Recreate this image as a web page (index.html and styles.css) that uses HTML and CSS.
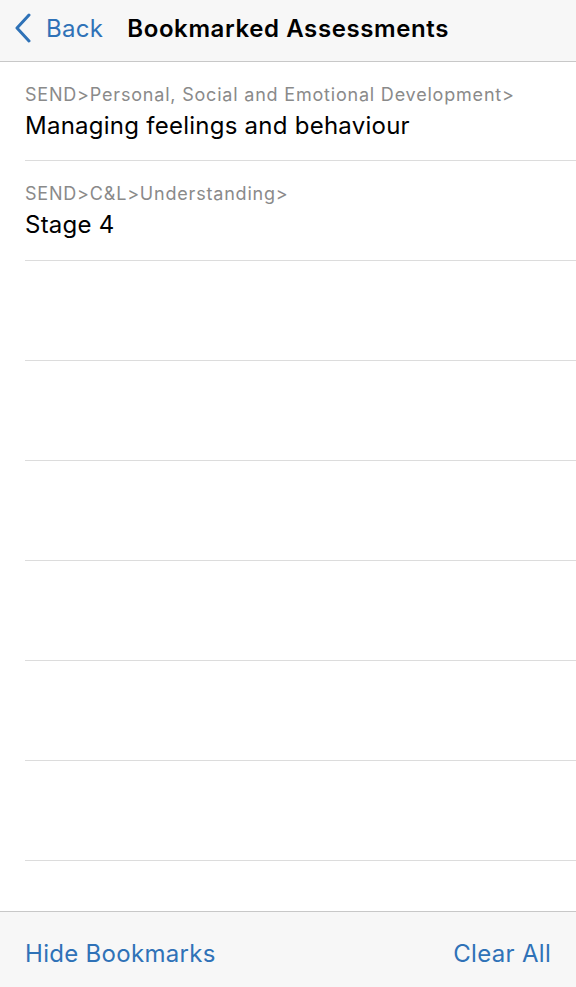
FILE: index.html
```html
<!DOCTYPE html>
<html lang="en">
<head>
    <meta charset="UTF-8">
    <meta name="viewport" content="width=device-width, initial-scale=1.0">
    <title>Bookmarked Assessments</title>
    <link rel="stylesheet" href="styles.css">
</head>
<body>
    <div class="screen">
        <div class="nav-bar">
            <a class="back" href="#">
                <svg class="chevron" width="20" height="30" viewBox="0 0 20 30">
                    <path d="M16 2 L4 15 L16 28" fill="none" stroke="currentColor" stroke-width="3" stroke-linecap="round" stroke-linejoin="round"/>
                </svg>
                <span>Back</span>
            </a>
            <h1>Bookmarked Assessments</h1>
        </div>

        <div class="list">
            <div class="row">
                <div class="path">SEND&gt;Personal, Social and Emotional Development&gt;</div>
                <div class="name">Managing feelings and behaviour</div>
            </div>
            <div class="row">
                <div class="path">SEND&gt;C&amp;L&gt;Understanding&gt;</div>
                <div class="name">Stage 4</div>
            </div>
            <div class="row"></div>
            <div class="row"></div>
            <div class="row"></div>
            <div class="row"></div>
            <div class="row"></div>
            <div class="row"></div>
        </div>

        <div class="toolbar">
            <a href="#">Hide Bookmarks</a>
            <a href="#">Clear All</a>
        </div>
    </div>
</body>
</html>
```

FILE: styles.css
```css
* {
    margin: 0;
    padding: 0;
    box-sizing: border-box;
}

body {
    font-family: Inter, "Liberation Sans", Arial, sans-serif;
    background: #fff;
    color: #000;
}

a {
    color: #2f72b7;
    text-decoration: none;
}

.screen {
    height: 987px;
    display: flex;
    flex-direction: column;
    overflow: hidden;
}

.nav-bar {
    height: 62px;
    flex-shrink: 0;
    display: flex;
    align-items: center;
    gap: 24px;
    padding: 0 0 5px 13px;
    background: #f7f7f7;
    border-bottom: 1px solid #c8c8c8;
}

.back {
    display: flex;
    align-items: center;
    gap: 13px;
    font-size: 24px;
    letter-spacing: 0.3px;
}

.chevron {
    display: block;
}

h1 {
    font-size: 24px;
    font-weight: 600;
    letter-spacing: 0.6px;
}

.list {
    flex: 1;
    padding-left: 25px;
}

.row {
    height: 100px;
    border-bottom: 1px solid #dcdcdc;
    padding-top: 22px;
}

.row:first-child {
    height: 99px;
}

.path {
    font-size: 18px;
    line-height: 22px;
    color: #8a8a8a;
    letter-spacing: 0.8px;
}

.name {
    font-size: 24px;
    line-height: 30px;
    margin-top: 5px;
    letter-spacing: 0.25px;
}

.toolbar {
    height: 76px;
    flex-shrink: 0;
    display: flex;
    justify-content: space-between;
    align-items: center;
    padding: 8px 25px 0;
    background: #f7f7f7;
    border-top: 1px solid #c8c8c8;
    font-size: 24px;
    letter-spacing: 0.3px;
}
```
